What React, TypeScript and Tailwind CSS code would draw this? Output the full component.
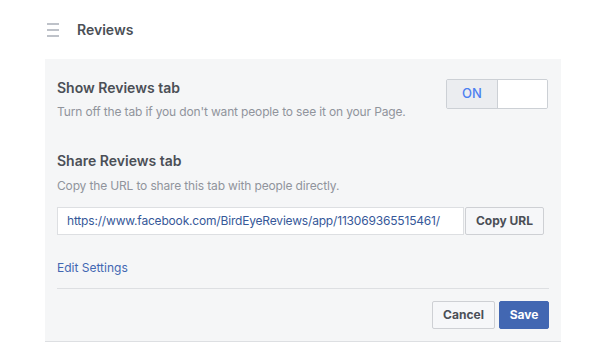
export default function App() {
  return (
    <div className="w-[608px] h-[364px] bg-white font-['Inter','Liberation_Sans',sans-serif] text-[#4b4f56]">
      {/* Header */}
      <div className="h-[59px] pl-[47px] flex items-center">
        <div className="flex flex-col gap-[4px] w-[12px]">
          <span className="block h-[2px] bg-[#bec2c9]" />
          <span className="block h-[2px] bg-[#bec2c9]" />
          <span className="block h-[2px] bg-[#bec2c9]" />
        </div>
        <h1 className="ml-[18px] text-[14px] leading-[18px] font-semibold text-[#4b4f56]">Reviews</h1>
      </div>

      {/* Panel */}
      <div className="ml-[45px] w-[516px] bg-[#f5f6f7] border-b border-[#dddfe2] px-[12px] pt-[20px] pb-[12px]">
        <div className="flex items-start justify-between">
          <div>
            <h2 className="text-[14px] leading-[18px] font-semibold">Show Reviews tab</h2>
            <p className="mt-[7px] text-[12px] leading-[16px] tracking-[-0.15px] text-[#90949c]">
              Turn off the tab if you don't want people to see it on your Page.
            </p>
          </div>
          <div className="mr-[1px] flex h-[30px] w-[102px] rounded-[2px] border border-[#ccd0d5] overflow-hidden">
            <div className="w-[51px] bg-[#ebedf0] border-r border-[#ccd0d5] flex items-center justify-center text-[13px] font-medium text-[#4b80f0]">
              ON
            </div>
            <div className="flex-1 bg-white" />
          </div>
        </div>

        <h2 className="mt-[32px] text-[14px] leading-[18px] font-semibold">Share Reviews tab</h2>
        <p className="mt-[8px] text-[12px] leading-[16px] tracking-[-0.15px] text-[#90949c]">
          Copy the URL to share this tab with people directly.
        </p>

        <div className="mt-[13px] flex h-[28px]">
          <div className="w-[407px] bg-white border border-[#dddfe2] flex items-center pl-[9px] text-[12px] tracking-[-0.18px] text-[#365899]">
            https://www.facebook.com/BirdEyeReviews/app/113069365515461/
          </div>
          <button className="ml-[1px] w-[79px] bg-[#f6f7f9] border border-[#ced0d4] rounded-[2px] text-[12px] font-bold text-[#4b4f56]">
            Copy URL
          </button>
        </div>

        <a className="block mt-[25px] text-[12px] leading-[16px] text-[#4267b2]">Edit Settings</a>

        <div className="mt-[12px] border-t border-[#dddfe2]" />

        <div className="mt-[12px] flex justify-end gap-[4px]">
          <button className="h-[28px] w-[63px] bg-[#f6f7f9] border border-[#ced0d4] rounded-[2px] text-[12px] font-bold text-[#4b4f56]">
            Cancel
          </button>
          <button className="h-[28px] w-[50px] bg-[#4267b2] border border-[#4267b2] rounded-[2px] text-[12px] font-bold text-white">
            Save
          </button>
        </div>
      </div>
    </div>
  );
}
